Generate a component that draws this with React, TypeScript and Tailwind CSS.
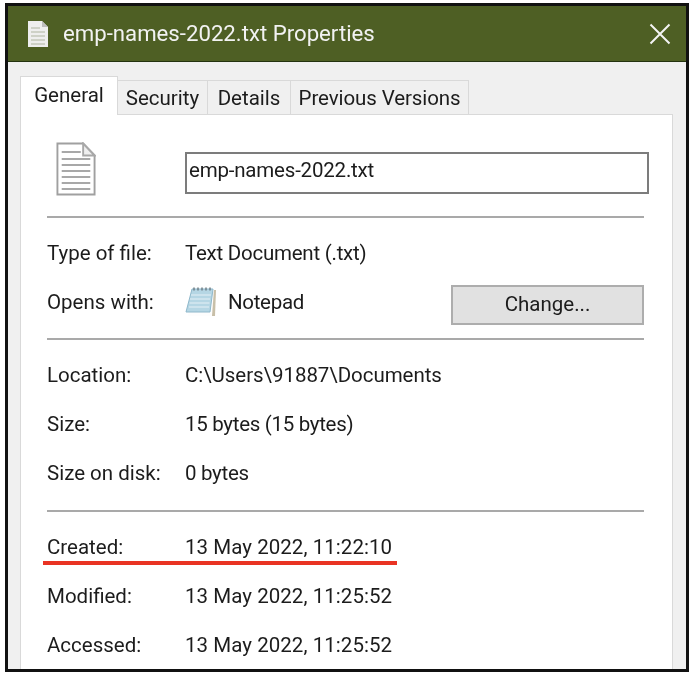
const font = { fontFamily: 'Roboto, "Noto Sans", sans-serif' };

function Row({ label, children }: { label: string; children: React.ReactNode }) {
  return (
    <div className="flex h-[49px] items-center">
      <div className="w-[138px] shrink-0">{label}</div>
      {children}
    </div>
  );
}

function Sep() {
  return <div className="h-[2px] bg-[#a9a9a9]" />;
}

function TitleIcon() {
  return (
    <svg width="22" height="28" viewBox="0 0 22 28" className="shrink-0">
      <path d="M1 1h14l6 6v20H1z" fill="#eeeeee" />
      <path d="M15 1v6h6" fill="#bdbdbd" />
      <path d="M4 8h9M4 12h14M4 16h14M4 20h14M4 24h14" stroke="#c4c8ba" strokeWidth="1.6" />
    </svg>
  );
}

function DocIcon() {
  return (
    <svg width="40" height="54" viewBox="0 0 42 54" preserveAspectRatio="none" className="shrink-0">
      <path d="M1.5 1.500h27l12 12v39h-39z" fill="#fff" stroke="#a0a0a0" strokeWidth="2" />
      <path d="M28.500 1.500v12h12z" fill="#efefef" stroke="#a8a8a8" strokeWidth="2" />
      <path d="M6 10h20M6 17h30M6 23h30M6 29h30M6 35h30M6 41h30M6 47h30" stroke="#a8a8a8" strokeWidth="2" />
    </svg>
  );
}

function NotepadIcon() {
  return (
    <svg width="32" height="33" viewBox="0 0 32 33" className="shrink-0">
      <path d="M10 4h21l-1 26H9z" fill="#c8bfa8" />
      <path d="M7 3h22l-2 27H3z" fill="#fdfdfd" />
      <path d="M7 3h21l-3 23H1z" fill="#b5d6e4" stroke="#8fb8cb" strokeWidth="1" />
      <path d="M6 9h20M5 13h20M4.500 17h20M4 21h20" stroke="#d5e8ef" strokeWidth="1.5" />
      <path d="M9 1.500v3M13 1.500v3M17 1.500v3M21 1.500v3M25 1.500v3" stroke="#6f7f88" strokeWidth="1.500" />
    </svg>
  );
}

export default function App() {
  return (
    <div className="h-[676px] w-[692px] overflow-hidden bg-white pl-[5px] pt-[3px]" style={font}>
      <div className="flex h-[669px] w-[684px] flex-col border-[3px] border-[#111111] bg-[#f0f0f0] blur-[0.4px]">
        <div className="flex h-[56px] shrink-0 items-center border-b border-[#24330f] bg-[#4e5f24] pl-[19px] pr-[15px] text-[#f2f2f2]">
          <TitleIcon />
          <div className="ml-[14px] flex-1 text-[22.2px]">emp-names-2022.txt Properties</div>
          <svg width="22" height="22" viewBox="0 0 22 22" fill="none" stroke="#f4f4f4" strokeWidth="2">
            <path d="M1.500 1.500l19 19M20.500 1.500l-19 19" />
          </svg>
        </div>

        <div className="flex min-h-0 flex-1 flex-col pl-[12px] pr-[13px] pt-[14px] text-[20.5px] text-[#1c1c1c]">
          <div className="relative z-10 -mb-[1px] flex h-[39px] shrink-0 items-end">
            <div className="flex h-[39px] w-[98px] items-center justify-center border border-b-0 border-[#d9d9d9] bg-white pb-[2px]">General</div>
            <div className="flex h-[35px] w-[90px] items-center justify-center border border-b-0 border-l-0 border-[#d9d9d9] pt-[1px]">Security</div>
            <div className="flex h-[35px] w-[83px] items-center justify-center border border-b-0 border-l-0 border-[#d9d9d9] pt-[1px]">Details</div>
            <div className="flex h-[35px] w-[178px] items-center justify-center border border-b-0 border-l-0 border-[#d9d9d9] pt-[1px] tracking-[-0.1px]">Previous Versions</div>
          </div>

          <div className="relative min-h-0 flex-1 border border-b-0 border-[#d9d9d9] bg-white pl-[26px] pr-[28px]">
            <div className="flex h-[101px] items-start pl-[9px] pt-[27px]">
              <DocIcon />
              <div className="ml-[89px] mt-[10px] flex h-[42px] w-[464px] shrink-0 items-center border-2 border-[#7c7c7c] pb-[5px] pl-[2px] tracking-[-0.2px]">emp-names-2022.txt</div>
            </div>
            <Sep />
            <div className="pb-[11px] pt-[11px]">
              <Row label="Type of file:">
                <div className="tracking-[-0.25px]">Text Document (.txt)</div>
              </Row>
              <Row label="Opens with:">
                <NotepadIcon />
                <div className="ml-[11px] flex-1 tracking-[-0.3px]">Notepad</div>
                <div className="mt-[4px] flex h-[40px] w-[193px] items-center justify-center border-2 border-[#adadad] bg-[#e1e1e1]">Change...</div>
              </Row>
            </div>
            <Sep />
            <div className="pb-[12px] pt-[11px]">
              <Row label="Location:">
                <div className="tracking-[-0.05px]">C:\Users\91887\Documents</div>
              </Row>
              <Row label="Size:">
                <div className="tracking-[-0.3px]">15 bytes (15 bytes)</div>
              </Row>
              <Row label="Size on disk:">
                <div className="tracking-[-0.3px]">0 bytes</div>
              </Row>
            </div>
            <Sep />
            <div className="pt-[11px]">
              <Row label="Created:">
                <div className="tracking-[0.05px]">13 May 2022, 11:22:10</div>
              </Row>
              <Row label="Modified:">
                <div className="tracking-[0.05px]">13 May 2022, 11:25:52</div>
              </Row>
              <Row label="Accessed:">
                <div className="tracking-[0.05px]">13 May 2022, 11:25:52</div>
              </Row>
            </div>
            <div className="absolute left-[22px] top-[446px] h-[4px] w-[354px] bg-[#e93323]" />
          </div>
        </div>
      </div>
    </div>
  );
}
